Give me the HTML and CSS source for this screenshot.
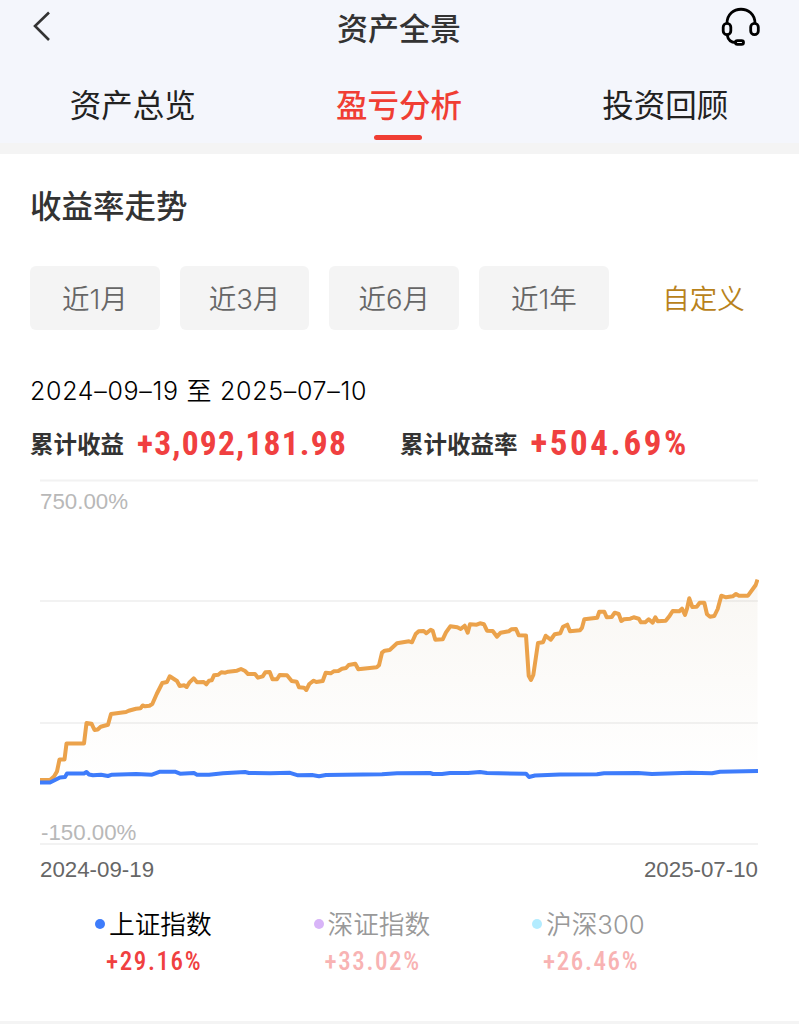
FILE: index.html
```html
<!DOCTYPE html>
<html lang="zh-CN">
<head>
  <meta charset="UTF-8" />
  <meta name="viewport" content="width=device-width, initial-scale=1.0"/>
  <title>资产全景</title>
  <link rel="stylesheet" href="styles.css">
</head>
<body>
  <header class="top">
    <div class="navbar">
      <svg class="back" width="20" height="32" viewBox="0 0 20 32">
        <path d="M17 1.5 L3 15 L17 29" />
      </svg>
      <h1>资产全景</h1>
      <svg class="service" width="42" height="42" viewBox="0 0 42 42">
        <path d="M7 17.5 C7 -1.5 35 -1.5 35 17.5" />
        <rect x="3.2" y="17.3" width="7.6" height="11.4" rx="3.8" />
        <rect x="30.7" y="17.3" width="7.6" height="11.4" rx="3.8" />
        <path d="M7.2 29 C8 34 11 36.5 16 36.5" />
        <rect x="15.5" y="34.6" width="8" height="3.8" rx="1.9" />
      </svg>
    </div>
    <nav class="tabs">
      <a class="tab">资产总览</a>
      <a class="tab active">盈亏分析</a>
      <a class="tab">投资回顾</a>
    </nav>
  </header>

  <main class="card">
    <h2>收益率走势</h2>

    <div class="ranges">
      <button class="range-btn">近1月</button>
      <button class="range-btn">近3月</button>
      <button class="range-btn">近6月</button>
      <button class="range-btn">近1年</button>
      <button class="range-btn custom">自定义</button>
    </div>

    <p class="period">2024–09–19 至 2025–07–10</p>

    <div class="summary">
      <div class="summary-item profit">
        <span class="label">累计收益</span>
        <span class="value">+3,092,181.98</span>
      </div>
      <div class="summary-item rate">
        <span class="label">累计收益率</span>
        <span class="value">+504.69%</span>
      </div>
    </div>

    <div class="chart">
      <svg width="719" height="366" viewBox="40 479 719 366">
        <defs>
          <linearGradient id="fade" gradientUnits="userSpaceOnUse" x1="0" y1="580" x2="0" y2="782">
            <stop offset="0" stop-color="#b49a6c" stop-opacity="0.08" />
            <stop offset="1" stop-color="#b49a6c" stop-opacity="0" />
          </linearGradient>
        </defs>
        <!-- grid -->
        <path class="grid" d="M40 480.5H758 M40 601H758 M40 723H758 M40 844H758" />
        <!-- my account -->
        <path class="area" fill="url(#fade)" d="M40 780 54 776 60 760 66 743 84 743 87 723 108 725 111 714 152 704 162 683 170 677 180 686 194 679 206 684 214 675 241 669 258 677 270 672 287 675 306 690 326 673 355 664 377 667 382 653 397 643 412 642 419 631 431 630 436 639 443 639 450 626 480 624 487 631 516 629 526 635 529 676 531 680 534 675 538 643 546 636 560 633 567 625 570 631 580 630 584 619 599 612 621 620 641 622 666 620 673 611 685 614 689 599 692 607 704 603 710 616 715 615 721 596 748 596 757.5 580V782H40Z" />
        <polyline class="line mine" points="40,780 50,780 54,776.5 57,771.5 59.5,759.5 64.5,759.5 66.5,743.5 84,743.5 86.5,723 91.5,723.7 94.5,730 97.7,729.5 100.7,726.7 108,724.7 111,714 126,712 128.7,710.7 136,708.7 140.5,708.3 142.7,705.5 145,706.3 149.5,705.7 152.3,704 156.7,694 162.3,683 167,682 169.7,676.3 177,681 179.7,686 184.3,685.3 186.7,687 189.3,682.7 193.7,678.3 197,682.3 203.7,682 206.3,684.3 209,680.7 211.7,680.3 214,675.3 218.3,674.7 221.3,672.3 225.3,672.7 228.3,671.7 237,670.7 241,669 244.7,670.7 248,674 255,674 258,677.7 262.7,676.3 265.3,672.3 269.7,672 272.5,679.3 277,679.3 279.7,675 287,675.3 291.7,681 296.7,681.7 299,687.3 304,687.7 306.3,690 309.3,684 313.7,680.7 316.3,682 322.7,681 325.7,672.7 330.7,673.3 333.7,671.3 338.3,671 342,668.7 346,668 348.7,665 355.3,663.7 358.3,669.3 376.7,667.3 379,665.3 382,652.7 384.7,650.7 389.7,650 397,643.3 409,641.3 412,642.3 415.7,634 418.7,631.3 423.7,631 426.3,633.3 430.7,629.7 432.7,630.7 435.3,639.7 442.7,639.3 446,632.3 450.3,626.3 457.3,627.3 460.7,629 464.7,625.7 467.7,632.7 470,624.3 476.7,624.7 480,623.3 484,624.3 487,630.7 492.7,631 497,636.7 500.7,632.7 508.7,631.3 511.3,629.3 516,629 518.7,635.3 526,635.5 528.7,675.7 531,680 533.3,675 538,643 543,642.3 545.7,635.7 550.7,639.7 554.7,634.3 560.3,633.3 563,626.7 567.3,624.7 570,631.3 580,630.3 582,627.7 584.3,619.3 597.3,617.7 599.3,611.7 604.3,611.7 606.7,617.3 611.7,617 614.7,612.7 618.7,614 621.3,621 624,619.3 630.3,618.7 633.7,617.3 638.7,618.7 641,622.3 645.3,622.3 648.7,619.3 652.7,622.7 655.3,617.3 657.7,621.3 665.7,620.7 669.7,615.7 672.7,611 679.3,611.3 682,608.7 685,615 687,608.7 689.3,598.3 692.3,607 696.7,606.7 699.7,602.7 704.3,602.7 707,614.3 710,616.7 714.3,616 717.7,609 721.3,595.7 726,597.3 732.7,596.3 736,594 739,595.7 748,595.7 755.7,585 757.5,579.5" />
        <!-- shanghai index -->
        <polyline class="line index" points="40,782.5 50,782.5 56,779.5 60,777.5 65,777 67,773.5 84,773.5 86.5,772 89,774.5 93,775.3 101,774.7 108,776 112,774.7 136,774 152,774.7 160,771.7 175,771.7 180,773.7 194,773 197,774.7 209,774.7 223,773.3 245,772 249,773 270,773.3 290,772.8 298,775.3 312,775 319,776.3 326,775 382,774.3 397,773.3 430,773 433,774 442,774 450,773 468,773 480,772 487,773 526,773.7 529,777 535,775.5 560,774.5 597,774.3 604,773.3 638,773 652,774 690,772.7 712,773.3 720,771.7 758,771" />
      </svg>
      <span class="y-label y-max">750.00%</span>
      <span class="y-label y-min">-150.00%</span>
    </div>
    <div class="x-axis">
      <span>2024-09-19</span>
      <span>2025-07-10</span>
    </div>

    <div class="legend">
      <div class="legend-item sh">
        <div class="name"><i class="dot"></i>上证指数</div>
        <div class="pct">+29.16%</div>
      </div>
      <div class="legend-item sz off">
        <div class="name"><i class="dot"></i>深证指数</div>
        <div class="pct">+33.02%</div>
      </div>
      <div class="legend-item hs off">
        <div class="name"><i class="dot"></i>沪深300</div>
        <div class="pct">+26.46%</div>
      </div>
    </div>
  </main>
</body>
</html>
```
FILE: styles.css
```css
* {
  box-sizing: border-box;
}

body {
  margin: 0;
  height: 1024px;
  overflow: hidden;
  background-color: #f4f4f4;
  color: #333;
  font-family: Inter, "Noto Sans CJK SC", sans-serif;
}

h1, h2, p {
  margin: 0;
}

.top {
  height: 143px;
  background-color: #f4f6fc;
}

.navbar {
  display: flex;
  justify-content: space-between;
  align-items: center;
  height: 54px;
  padding: 0 37px 0 32px;
}

.navbar h1 {
  font-size: 31px;
  line-height: 54px;
  font-weight: 500;
  padding: 3px 0 0 26px;
}

.back, .service {
  fill: none;
  stroke: #333;
  stroke-width: 2.6;
}

.service {
  stroke: #000;
  stroke-width: 2.8;
}

.tabs {
  display: flex;
  height: 89px;
}

.tab {
  flex: 1;
  position: relative;
  padding: 22px 1px 0 0;
  text-align: center;
  font-size: 31.5px;
  line-height: 60px;
  color: #222;
}

.tab.active {
  color: #f03e34;
  font-weight: 500;
}

.tab.active::after {
  content: "";
  position: absolute;
  left: 50%;
  bottom: 3px;
  width: 48px;
  height: 5px;
  margin-left: -25px;
  border-radius: 3px;
  background-color: #f03e34;
}

.card {
  height: 867px;
  margin-top: 11px;
  padding: 0 30px;
  background-color: #fff;
}

.card h2 {
  padding-top: 23px;
  font-size: 31.5px;
  line-height: 60px;
  font-weight: 500;
}

.ranges {
  display: flex;
  gap: 20px;
  margin-top: 29px;
}

.range-btn {
  width: 129.7px;
  height: 64px;
  padding: 0 0 3px;
  border: none;
  border-radius: 6px;
  background-color: #f4f4f4;
  color: #666;
  font-family: inherit;
  font-size: 27.5px;
  font-weight: 350;
}

.range-btn.custom {
  margin-left: 10px;
  background: none;
  color: #b8821b;
}

.period {
  margin-top: 41px;
  font-size: 25px;
  line-height: 40px;
  font-weight: 350;
  letter-spacing: 0.7px;
  color: #000;
}

.summary {
  display: flex;
  height: 50px;
  margin-top: 7px;
}

.summary-item {
  display: flex;
  align-items: center;
}

.profit {
  width: 370px;
}

.label {
  margin-right: 13px;
  font-size: 23.5px;
  font-weight: 700;
}

.value {
  font-family: "Roboto Condensed", Roboto, sans-serif;
  font-stretch: 75%;
  font-size: 33.5px;
  font-weight: 700;
  letter-spacing: 1.2px;
  color: #f04040;
}

.rate .value {
  font-size: 35px;
  letter-spacing: 2.6px;
}

.chart {
  position: relative;
  height: 366px;
  margin: 11px 0 0 10px;
}

.chart svg {
  display: block;
}

.grid {
  fill: none;
  stroke: #f2f2f2;
  stroke-width: 2;
}

.line {
  fill: none;
  stroke-width: 4;
  stroke-linejoin: round;
}

.mine {
  stroke: #eba24b;
}

.index {
  stroke: #3e7cfb;
}

.y-label {
  position: absolute;
  left: 0;
  font-family: "Liberation Sans", Arial, sans-serif;
  font-size: 22.3px;
  line-height: 26px;
  color: #b8b8b8;
}

.y-max {
  top: 10px;
}

.y-min {
  left: 1px;
  bottom: -1px;
}

.x-axis {
  display: flex;
  justify-content: space-between;
  margin: 11px 11px 0 10px;
  font-family: "Liberation Sans", Arial, sans-serif;
  font-size: 22.3px;
  line-height: 28px;
  color: #666;
}

.legend {
  display: flex;
  margin: 18px 0 0 65px;
}

.legend-item {
  width: 218.5px;
}

.name {
  display: flex;
  align-items: center;
  height: 40px;
  font-size: 25.7px;
  font-weight: 350;
  color: #000;
}

.dot {
  width: 10px;
  height: 10px;
  margin: 3px 4px 0 0;
  border-radius: 50%;
  background-color: #3e7cfb;
}

.pct {
  padding: 4px 0 0 11px;
  font-family: "Roboto Condensed", Roboto, sans-serif;
  font-stretch: 75%;
  font-size: 25px;
  line-height: 32px;
  font-weight: 500;
  letter-spacing: 1.6px;
  color: #f04040;
}

.off .name {
  color: #999;
}

.off .pct {
  color: #f8b3b3;
}

.sz .dot {
  background-color: #d8b4f8;
}

.hs .dot {
  background-color: #b3ecff;
}
```
